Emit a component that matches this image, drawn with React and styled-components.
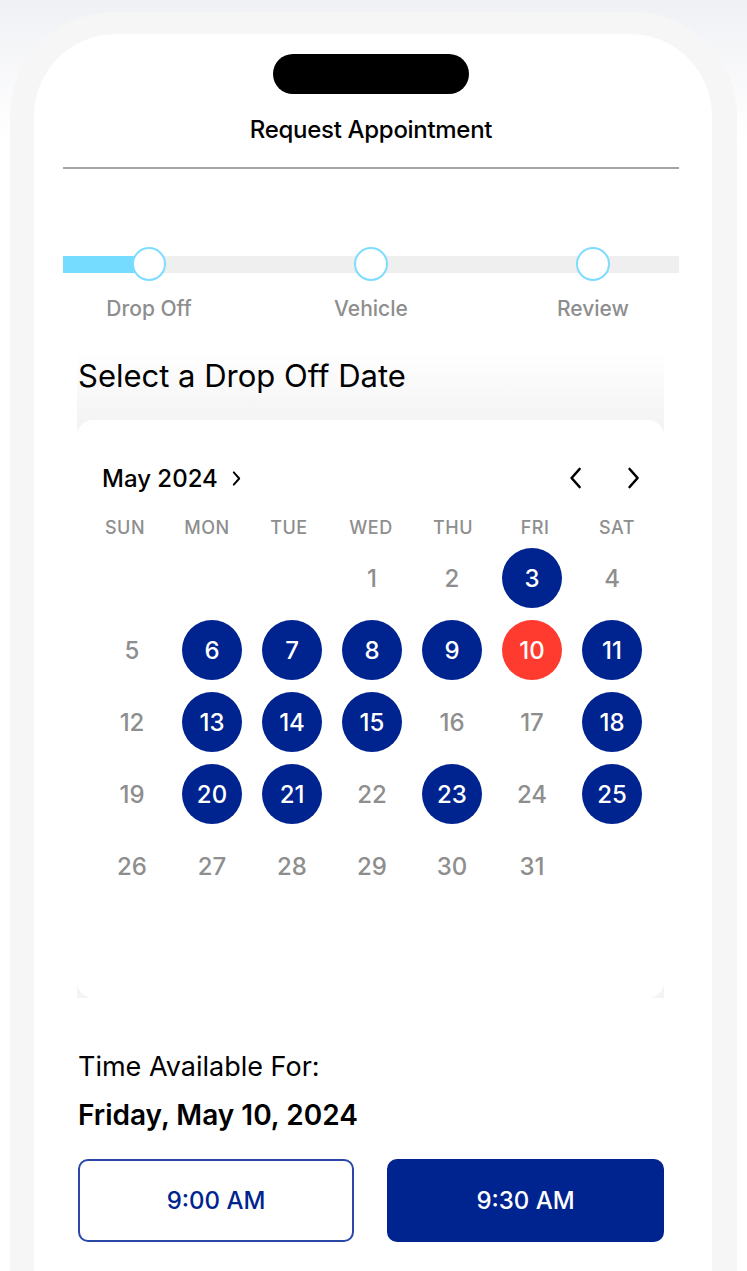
import React from 'react'
import styled, { createGlobalStyle } from 'styled-components'

const NAVY = '#00248f'
const GRAY = '#8e8e8e'

const GlobalStyle = createGlobalStyle`
  * { box-sizing: border-box; }
  body {
    margin: 0;
    font-family: Inter, "Noto Sans", sans-serif;
    background: linear-gradient(#f0f1f5, #ffffff 140px);
    overflow: hidden;
  }
`

const Page = styled.div`
  padding: 12px 10px 0 10px;
  height: 1271px;
  overflow: hidden;
`

const Phone = styled.div`
  width: 727px;
  background: #f6f6f7;
  border-radius: 104px 104px 0 0;
  padding: 22px 25px 0 24px;
`

const Screen = styled.div`
  background: #fff;
  border-radius: 82px 82px 0 0;
  padding: 20px 33px 60px 29px;
  min-height: 1300px;
`

const Island = styled.div`
  width: 196px;
  height: 40px;
  margin: 0 auto;
  background: #000;
  border-radius: 20px;
`

const Title = styled.h1`
  margin: 22px 0 0;
  font-size: 24px;
  line-height: 28px;
  font-weight: 500;
  text-align: center;
  letter-spacing: -0.3px;
  color: #000;
`

const Divider = styled.hr`
  margin: 23px 0 0;
  border: none;
  height: 2px;
  background: #a3a3a3;
`

const Steps = styled.div`
  margin-top: 78px;
  display: flex;
  justify-content: space-between;
  padding: 0 35px;
  background:
    linear-gradient(to right, #75dcff 0 72px, #efefef 72px) 0 9px / 100% 17px no-repeat;
`

const Step = styled.div`
  width: 102px;
  display: flex;
  flex-direction: column;
  align-items: center;
`

const StepDot = styled.div`
  width: 34px;
  height: 34px;
  border-radius: 50%;
  background: #fff;
  border: 2px solid #7ddcff;
`

const StepLabel = styled.div`
  margin-top: 16px;
  font-size: 21px;
  line-height: 24px;
  color: ${GRAY};
  font-weight: 500;
  white-space: nowrap;
`

const DateSection = styled.section`
  margin: 29px 15px 0 14px;
  padding-top: 8px;
  background: linear-gradient(#ffffff, #f4f4f4 70px);
`

const SectionTitle = styled.h2`
  margin: 0 0 26px 1px;
  font-size: 31px;
  line-height: 36px;
  font-weight: 400;
  color: #000;
`

const Card = styled.div`
  background: #fff;
  border-radius: 16px;
  padding: 43px 24px 96px 15px;
`

const MonthBar = styled.div`
  display: flex;
  align-items: center;
  justify-content: space-between;
  padding-left: 10px;
  height: 30px;
`

const MonthLabel = styled.div`
  display: flex;
  align-items: center;
  gap: 14px;
  font-size: 24px;
  font-weight: 500;
  color: #000;
`

const NavButtons = styled.div`
  display: flex;
  align-items: center;
  gap: 45px;
`

const Weekdays = styled.div`
  margin-top: 24px;
  margin-left: -8px;
  display: grid;
  grid-template-columns: repeat(7, 82px);
`

const Weekday = styled.div`
  text-align: center;
  font-size: 18px;
  line-height: 22px;
  font-weight: 500;
  color: ${GRAY};
  letter-spacing: 0.5px;
`

const Days = styled.div`
  margin-top: 3px;
  display: grid;
  grid-template-columns: repeat(7, 80px);
  grid-auto-rows: 72px;
`

const DayCell = styled.div`
  display: flex;
  align-items: center;
  justify-content: center;
`

const Day = styled.div`
  width: 60px;
  height: 60px;
  border-radius: 50%;
  display: flex;
  align-items: center;
  justify-content: center;
  font-size: 24px;
  font-weight: 500;
  color: ${p => (p.$tone === 'plain' ? GRAY : '#fff')};
  background: ${p =>
    p.$tone === 'open' ? NAVY : p.$tone === 'today' ? '#ff3b30' : 'transparent'};
`

const TimeBlock = styled.div`
  margin: 53px 15px 0 15px;
`

const TimeCaption = styled.div`
  font-size: 27px;
  line-height: 32px;
  color: #000;
`

const TimeDate = styled.div`
  margin-top: 15px;
  font-size: 28px;
  line-height: 34px;
  font-weight: 600;
  color: #000;
`

const Slots = styled.div`
  margin-top: 27px;
  display: grid;
  grid-template-columns: 276px 277px;
  justify-content: space-between;
`

const Slot = styled.button`
  height: 83px;
  border-radius: 10px;
  font-family: inherit;
  font-size: 24px;
  font-weight: 500;
  border: 2px solid ${p => (p.$active ? NAVY : '#2a47a8')};
  background: ${p => (p.$active ? NAVY : '#fff')};
  color: ${p => (p.$active ? '#fff' : NAVY)};
`

const Chevron = ({ dir = 'right', size = 22, stroke = 2.6 }) => (
  <svg width={size * 0.6} height={size} viewBox="0 0 12 22" fill="none">
    <polyline
      points={dir === 'right' ? '2,2 10,11 2,20' : '10,2 2,11 10,20'}
      stroke="#000"
      strokeWidth={stroke}
      strokeLinecap="round"
      strokeLinejoin="round"
    />
  </svg>
)

const open = [3, 6, 7, 8, 9, 11, 13, 14, 15, 18, 20, 21, 23, 25]
const weekdays = ['SUN', 'MON', 'TUE', 'WED', 'THU', 'FRI', 'SAT']

export default function App() {
  const cells = [null, null, null]
  for (let d = 1; d <= 31; d++) cells.push(d)

  return (
    <Page>
      <GlobalStyle />
      <Phone>
        <Screen>
          <Island />
          <Title>Request Appointment</Title>
          <Divider />

          <Steps>
            {['Drop Off', 'Vehicle', 'Review'].map(s => (
              <Step key={s}>
                <StepDot />
                <StepLabel>{s}</StepLabel>
              </Step>
            ))}
          </Steps>

          <DateSection>
            <SectionTitle>Select a Drop Off Date</SectionTitle>
            <Card>
              <MonthBar>
                <MonthLabel>
                  May 2024
                  <Chevron size={15} stroke={2.8} />
                </MonthLabel>
                <NavButtons>
                  <Chevron dir="left" />
                  <Chevron />
                </NavButtons>
              </MonthBar>
              <Weekdays>
                {weekdays.map(w => (
                  <Weekday key={w}>{w}</Weekday>
                ))}
              </Weekdays>
              <Days>
                {cells.map((d, i) => (
                  <DayCell key={i}>
                    {d && (
                      <Day $tone={d === 10 ? 'today' : open.includes(d) ? 'open' : 'plain'}>
                        {d}
                      </Day>
                    )}
                  </DayCell>
                ))}
              </Days>
            </Card>
          </DateSection>

          <TimeBlock>
            <TimeCaption>Time Available For:</TimeCaption>
            <TimeDate>Friday, May 10, 2024</TimeDate>
            <Slots>
              <Slot>9:00 AM</Slot>
              <Slot $active>9:30 AM</Slot>
            </Slots>
          </TimeBlock>
        </Screen>
      </Phone>
    </Page>
  )
}
